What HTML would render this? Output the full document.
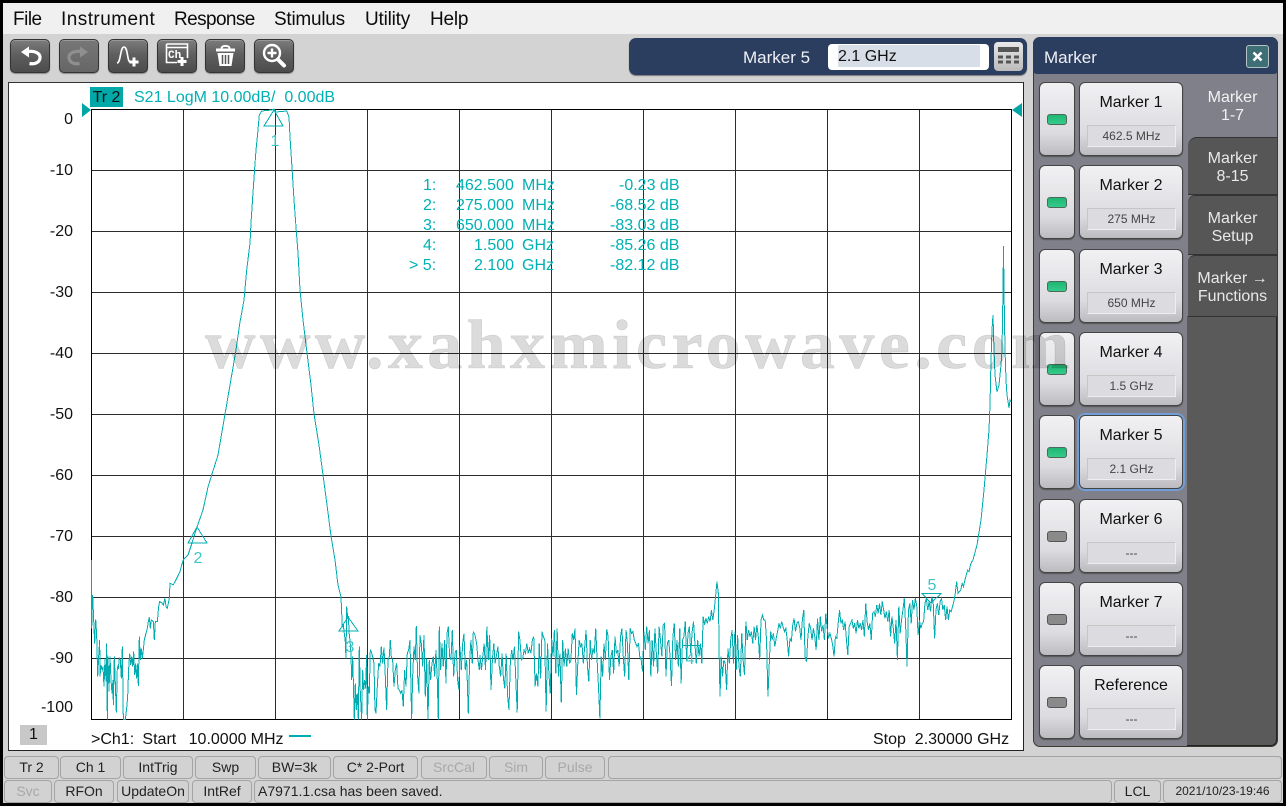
<!DOCTYPE html>
<html><head><meta charset="utf-8"><style>
html,body{margin:0;padding:0;width:1286px;height:806px;overflow:hidden;background:#000}
*{box-sizing:border-box}
body{position:relative;font-family:"Liberation Sans",sans-serif;color:#111}
.a{position:absolute;white-space:pre}
.m{top:8px;font-size:19px;line-height:24px;color:#0c0c0c}
.tb{position:absolute;top:39px;width:40px;height:34px;border-radius:5px;border:1px solid #333;background:linear-gradient(#7c7c7c,#5f5f5f 45%,#4c4c4c);box-shadow:inset 0 1px 0 #999,0 1px 1px #888}
.tb svg{position:absolute;left:-1px;top:-1px}
.y{position:absolute;left:30px;width:43px;text-align:right;font-size:16px;line-height:18px;color:#111}
.t{position:absolute;font-size:16px;line-height:20px;color:#00b0b4;white-space:pre}
.led{position:absolute;left:1039px;width:36px;height:74px;border:1px solid #444;border-radius:6px;background:linear-gradient(#f1f1f4,#dcdce0 70%,#bcbcc0);box-shadow:0 1px 1px #555}
.led i{position:absolute;left:7px;top:31px;width:20px;height:11px;border-radius:3px;border:1px solid #555;background:#8a8a8a}
.led i.g{background:linear-gradient(#1fb673,#35cb8b);border-color:#4a6a5a}
.btn{position:absolute;left:1079px;width:104px;height:74px;border:1px solid #444;border-radius:6px;background:linear-gradient(#f1f1f4,#dcdce0 70%,#bcbcc0);box-shadow:0 1px 1px #555;text-align:center;font-size:16px;line-height:20px;color:#111;padding-top:10px}
.btn b{position:absolute;left:7px;top:42px;width:89px;height:22px;font-weight:normal;font-size:12px;line-height:21px;color:#444;border:1px solid #c6c6c6;border-bottom-color:#eee;border-right-color:#eee;background:#dcdce0}
.tab{position:absolute;left:1188px;width:89px;text-align:center;font-size:16px;line-height:18px;color:#e8e8ea;background:#565656;border-radius:9px 0 0 0;border-top:1px solid #333;border-bottom:1px solid #333;padding-top:12px}
.s{position:absolute;height:23px;border:1px solid #a4a4a4;border-radius:4px;background:#d2d2d2;text-align:center;font-size:14px;line-height:21px;color:#222;white-space:pre}
.d{color:#a8a8a8}
</style></head><body>
<div class="a" style="left:3px;top:3px;width:1280px;height:800px;background:#d3d3d3"></div>
<div class="a" style="left:3px;top:3px;width:1280px;height:31px;background:#f0f0f0"></div>
<span class="a m" style="left:13px;letter-spacing:-.5px">File</span>
<span class="a m" style="left:61px;letter-spacing:.45px">Instrument</span>
<span class="a m" style="left:174px;letter-spacing:-.6px">Response</span>
<span class="a m" style="left:274px;letter-spacing:-.25px">Stimulus</span>
<span class="a m" style="left:365px;letter-spacing:-.2px">Utility</span>
<span class="a m" style="left:430px;letter-spacing:-.2px">Help</span>

<div class="tb" style="left:10px"><svg width="40" height="34" viewBox="0 0 40 34"><path d="M11 13L19 7.500V18.500Z" fill="#fff"/><path d="M18 12.500C26 11.500 30.500 15 30 19C29.500 23.500 25 25.500 19.500 24.500" fill="none" stroke="#fff" stroke-width="3.200"/></svg></div>
<div class="tb" style="left:59px;background:linear-gradient(#777,#666);"><svg width="40" height="34" viewBox="0 0 40 34"><path d="M29 13L21 7.500V18.500Z" fill="#8f8f8f"/><path d="M22 12.500C14 11.500 9.500 15 10 19C10.500 23.500 15 25.500 20.500 24.500" fill="none" stroke="#8f8f8f" stroke-width="3.200"/></svg></div>
<div class="tb" style="left:108px"><svg width="40" height="34" viewBox="0 0 40 34"><path d="M9 24C13 24 12 8 16 8C20 8 19 22 22 23" fill="none" stroke="#fff" stroke-width="1.600"/><path d="M26 18.500V27.500M21.500 23H30.500" stroke="#fff" stroke-width="3"/></svg></div>
<div class="tb" style="left:157px"><svg width="40" height="34" viewBox="0 0 40 34"><path d="M9.500 5H30.500V19M20 23.500H9.500V5M9.500 8.500H30.500" fill="none" stroke="#fff" stroke-width="1.600"/><text x="11" y="19" font-family="Liberation Mono,monospace" font-size="11" font-weight="bold" fill="#fff">Ch</text><path d="M25 18V27M20.500 22.500H29.500" stroke="#fff" stroke-width="3"/></svg></div>
<div class="tb" style="left:205px"><svg width="40" height="34" viewBox="0 0 40 34"><path d="M11 11H30" stroke="#fff" stroke-width="3"/><path d="M16.500 9.500C16.500 6 24.500 6 24.500 9.500" fill="none" stroke="#fff" stroke-width="2"/><path d="M12.500 14H28.500L26.500 27H14.500Z" fill="#fff"/><path d="M17.500 16V25M20.500 16V25M23.500 16V25" stroke="#555" stroke-width="1.500"/></svg></div>
<div class="tb" style="left:254px"><svg width="40" height="34" viewBox="0 0 40 34"><circle cx="18" cy="14" r="8" fill="none" stroke="#fff" stroke-width="2.400"/><path d="M18 9.500V18.500M13.500 14H22.500" stroke="#fff" stroke-width="2.400"/><path d="M24 20.500L30 26.500" stroke="#fff" stroke-width="4" stroke-linecap="round"/></svg></div>

<div class="a" style="left:629px;top:38px;width:398px;height:37px;border-radius:7px;background:#2c3e60;box-shadow:0 1px 1px #777"></div>
<span class="a" style="left:743px;top:47px;font-size:17px;line-height:22px;color:#eef0f4">Marker 5</span>
<div class="a" style="left:828px;top:44px;width:161px;height:26px;border-radius:4px;background:#fff"></div>
<div class="a" style="left:838px;top:45px;width:142px;height:22px;background:#d8dee8;font-size:16px;line-height:23px;color:#111">2.1 GHz</div>
<div class="a" style="left:994px;top:42px;width:29px;height:29px;border-radius:4px;background:linear-gradient(#e8e8e8,#bbb)"><svg width="29" height="29" style="position:absolute;left:0;top:0"><rect x="4" y="5" width="21" height="5" fill="#555"/><path d="M4 15H25M4 20H25" stroke="#555" stroke-width="3" stroke-dasharray="5 3"/></svg></div>

<div class="a" style="left:8px;top:82px;width:1016px;height:669px;background:#fff;border:1px solid #333;border-right-color:#222;border-bottom-color:#222"></div>
<div class="a" style="left:90px;top:87px;width:33px;height:20px;background:#00a8a8;color:#111;font-size:16px;line-height:21px;text-align:center">Tr 2</div>
<span class="t" style="left:134px;top:88px">S21 LogM 10.00dB/  0.00dB</span>

<div class="y" style="top:111px">0</div><div class="y" style="top:162px">-10</div><div class="y" style="top:223px">-20</div><div class="y" style="top:284px">-30</div><div class="y" style="top:345px">-40</div><div class="y" style="top:406px">-50</div><div class="y" style="top:467px">-60</div><div class="y" style="top:528px">-70</div><div class="y" style="top:589px">-80</div><div class="y" style="top:650px">-90</div><div class="y" style="top:699px">-100</div>

<svg class="a" style="left:0;top:0" width="1286" height="806">
<path d="M183.500 109V719M275.500 109V719M367.500 109V719M459.500 109V719M551.500 109V719M643.500 109V719M735.500 109V719M827.500 109V719M919.500 109V719M91 170.500H1011M91 231.500H1011M91 292.500H1011M91 353.500H1011M91 414.500H1011M91 475.500H1011M91 536.500H1011M91 597.500H1011M91 658.500H1011" stroke="#2c2c2c" stroke-width="1" fill="none"/>
<path d="M91.500 109.500H1011.500V719.500H91.500Z" stroke="#000" stroke-width="1" fill="none"/>
<path d="M82 103L91 110L82 117Z M1022 103L1012 110L1022 117Z" fill="#00a5a5"/>
<g fill="none" stroke="#00acb0" stroke-width="1" shape-rendering="crispEdges">
<polyline vector-effect="non-scaling-stroke" transform="translate(80 560) scale(.3333)" points="35,0 35,205 38,105 41,180 44,250 47,178 50,225 53,350 56,290 59,240 60,350 63,315 66,330 69,320 72,380 75,295 78,365 80,250 82,478 84,290 87,395 90,290 93,360 96,400 99,360 100,435 103,290 106,370 109,458 112,320 115,325 118,295 121,300 124,355 127,260 130,478 133,478 136,478 140,445 143,410 146,325 149,280 152,315 155,290 158,320 161,275 164,345 167,310 170,355 173,310 175,378 178,230 181,300 184,265 187,295 190,270 193,240 198,220 202,205 205,185 208,172 211,205 214,180 220,185 223,240 226,185 232,185 236,140 239,125 245,128 250,135 255,115 258,140 262,145 268,115 270,70 275,72 280,75 285,65 290,55 295,45 300,35 305,15 310,0"/>
<polyline points="183,560 188,555 192,543 197,527 203,510 208,487 212,474 218,455 224,420 230,385 236,350 240,322 244,300 246.700,270 250,243 251,223 252.700,197 254.700,168 256,150 257.700,133 259.300,115 261.700,111 271.700,110 274,109 276,112 286.700,111 289,117 290,137 292,168 294,200 296,227 298,253 300,290 303,320 307,353 311,385 314,414 319,445 323,475 327,505 331,536 335,560 338,585 341,597"/>
<polyline vector-effect="non-scaling-stroke" transform="translate(80 560) scale(.3333)" points="783,110 787,200 790,195 793,220 796,245 798,295 800,140 803,170 805,170 808,225 810,240 813,280 815,360 818,290 820,360 823,478 826,370 829,450 832,400 835,478 838,260 841,400 845,478 848,330 851,390 854,360 857,385 860,285 862,478 865,380 868,400 871,270 874,275 878,290 882,310 885,450 888,460 892,380 896,310 900,320 904,260 908,310 912,262 916,350 920,450 924,300 928,290 931,240 934,290 938,300 942,380 946,330 950,310 954,385 958,390 962,400 966,390 970,440 974,330 978,380 982,280 986,270 990,240 995,478 998,350 1002,260 1006,300 1009,198 1013,350 1017,400 1020,225 1024,250 1028,320 1032,225 1036,410 1040,295 1044,478 1048,300 1052,360 1056,310 1060,290 1064,350 1068,270 1072,360 1075,478 1078,200 1082,330 1086,250 1090,320 1094,240 1098,370 1101,220 1105,200 1109,290 1113,300 1117,210 1121,350 1125,280 1129,270 1133,360 1137,390 1140,260 1144,330 1148,250 1152,220 1156,330 1160,300 1165,460 1169,300 1173,240 1177,310 1180,215 1185,225 1190,250 1194,300 1198,330 1200,300"/>
<polyline vector-effect="non-scaling-stroke" transform="translate(480 560) scale(.3444 .3333)" points="0,285 4,330 8,290 12,250 16,330 20,200 24,300 28,225 32,390 36,300 40,250 44,310 48,285 52,260 56,320 60,350 64,280 68,355 72,385 76,280 80,405 84,450 88,310 92,270 96,300 100,260 104,360 108,458 112,215 116,240 120,300 124,295 128,270 132,280 136,250 140,280 144,265 148,280 152,240 156,230 160,380 164,340 168,380 172,250 176,355 180,215 184,230 188,240 192,455 196,250 200,340 204,400 208,235 212,290 216,210 220,340 224,205 228,350 232,280 236,428 240,240 244,320 248,265 252,320 256,265 260,310 264,300 268,220 272,240 276,205 280,405 284,310 288,240 292,260 296,250 300,310 304,260 308,210 312,320 316,365 320,240 324,300 328,265 332,280 336,205 340,300 344,380 348,475 352,290 356,350 360,250 364,300 368,208 372,230 376,360 380,290 384,270 388,340 392,230 396,280 400,270 404,320 408,230 412,205 416,290 420,350 424,210 428,250 432,360 436,205 440,220 444,215 448,240 452,250 456,260 460,250 464,290 468,300 472,335 476,215 480,270 484,200 488,250 492,210 496,350 500,240 504,320 508,205 512,280 516,340 520,200 524,240 528,290 532,195 536,190 540,350 544,250 548,240 552,290 556,378 560,230 564,190 568,300 572,240 576,320 580,205 584,370 588,240 592,230 596,185 600,300 604,220 608,200 612,280 616,215 620,185 624,250 628,310 632,240 636,290 640,250 644,310 648,170 652,195 656,175 660,190 664,170 668,185 672,150 676,180 680,150 684,110 688,65 692,100 695,320 697,410 700,290 704,350 708,300 712,310 716,390 720,265 724,310 728,240 732,210 736,310 740,215 744,330 748,225 752,320 756,350 760,220 764,300 768,345 772,185 776,240 780,210 784,230 788,215 792,250 796,200 800,240 804,195 808,230 812,300 816,180 820,165 824,180 828,180 832,240 836,410 840,310 844,215 848,240 852,220 856,260 860,235 864,215 868,190 872,205 876,185 880,200 884,215 888,205 892,240 896,290 900,235 904,245 908,195 912,175 916,215 920,190 924,185 928,200 932,240 936,180 940,150 944,290 948,305 952,230 956,190 960,205 964,240 968,205 972,230 976,270 980,175 984,240 988,170 992,215 996,195 1000,240 1004,160 1008,205 1012,235 1016,220 1020,235 1024,255 1028,290 1032,230 1036,235 1040,190 1044,150 1048,190 1052,180 1056,210 1060,185 1064,240 1068,285 1072,200 1076,190 1080,180 1084,205 1088,190 1092,220 1096,180 1100,205 1104,190 1108,210 1112,180 1116,230 1120,130 1124,185 1128,210 1132,190 1136,240 1140,160 1144,155 1148,170 1152,135 1156,160 1160,130 1164,165 1168,125 1172,150 1176,175 1180,155 1184,185 1188,150 1192,230 1196,170 1200,205 1204,250 1208,180 1212,300 1216,140 1220,220 1224,180 1228,150 1232,115 1236,200 1240,320 1244,150 1248,130 1252,190 1256,120 1260,150 1264,115 1268,135 1272,225 1276,180 1280,205 1284,190 1288,185 1292,130 1296,115 1300,150 1304,125 1308,155 1312,110 1316,130 1320,235 1324,150 1328,130 1332,165 1336,125 1340,115 1344,150 1348,135 1352,180 1356,140 1360,180 1364,150 1368,155 1372,140 1376,125 1380,100 1384,65 1388,100 1392,95 1396,90 1400,70 1404,80 1408,60 1412,45 1416,30 1420,35 1424,15 1428,5 1432,0"/>
<polyline points="973,560 977,545 981,520 984,490 987,455 989,430 990,405 991,360 992,330 993,315 994,350 995,375 997,392 999,385 1001,365 1002,350 1003,290 1003.500,246 1004,290 1005,350 1006,380 1007,395 1009,408 1010,400 1011,402"/>
<path d="M274 110L264 126H283Z M197 527L188 543H207Z M348 617L339 631H358Z M682 645.500H700 M931 603L922 593.500H941Z"/>
<path d="M289 736H311" stroke-width="2"/>
</g>
<g font-family="Liberation Sans,sans-serif" font-size="16" fill="#3cc4c8" text-anchor="middle"><text x="275" y="146">1</text><text x="198" y="563">2</text><text x="350" y="652">3</text><text x="690" y="664">4</text><text x="932" y="590">5</text></g>
</svg>

<span class="t" style="left:423px;top:176px">1:</span><span class="t" style="left:423px;top:196px">2:</span><span class="t" style="left:423px;top:216px">3:</span><span class="t" style="left:423px;top:236px">4:</span><span class="t" style="left:409px;top:256px">&gt; 5:</span>
<span class="t" style="left:456px;top:176px">462.500</span><span class="t" style="left:456px;top:196px">275.000</span><span class="t" style="left:456px;top:216px">650.000</span><span class="t" style="left:474px;top:236px">1.500</span><span class="t" style="left:474px;top:256px">2.100</span>
<span class="t" style="left:522px;top:176px">MHz</span><span class="t" style="left:522px;top:196px">MHz</span><span class="t" style="left:522px;top:216px">MHz</span><span class="t" style="left:522px;top:236px">GHz</span><span class="t" style="left:522px;top:256px">GHz</span>
<span class="t" style="left:619px;top:176px">-0.23 dB</span><span class="t" style="left:610px;top:196px">-68.52 dB</span><span class="t" style="left:610px;top:216px">-83.03 dB</span><span class="t" style="left:610px;top:236px">-85.26 dB</span><span class="t" style="left:610px;top:256px">-82.12 dB</span>

<div class="a" style="left:20px;top:725px;width:27px;height:20px;background:#c8c8c8;text-align:center;font-size:16px;line-height:20px">1</div>
<span class="a" style="left:91px;top:730px;font-size:16px;line-height:20px;color:#111;word-spacing:-.3px">&gt;Ch1:  Start   10.0000 MHz</span>
<span class="a" style="left:873px;top:730px;font-size:16px;line-height:20px;color:#111">Stop  2.30000 GHz</span>

<div class="a" style="left:1033px;top:37px;width:245px;height:710px;background:#7f8089;border:1px solid #3a3a30;border-radius:7px"></div>
<div class="a" style="left:1187px;top:316px;width:90px;height:430px;background:#5a5a5a;border-radius:0 0 6px 0;border-bottom:1px solid #222;border-right:1px solid #222"></div>
<div class="a" style="left:1033px;top:37px;width:245px;height:37px;background:#2c3e60;border-radius:7px 7px 4px 4px;font-size:17px;line-height:42px;color:#eef0f4;padding-left:11px">Marker</div>
<div class="a" style="left:1246px;top:45px;width:23px;height:23px;border:1px solid #b4c4c4;border-radius:3px;background:#3f6f76"><svg width="21" height="21"><path d="M6.500 6.500L14.500 14.500M14.500 6.500L6.500 14.500" stroke="#fff" stroke-width="2.600"/></svg></div>

<div class="tab" style="top:76px;height:62px;background:#7f8089;border:0;border-radius:0;color:#f2f2f4;padding-top:13px">Marker<br>1-7</div>
<div class="tab" style="top:137px;height:58px">Marker<br>8-15</div>
<div class="tab" style="top:195px;height:60px;border-radius:7px 0 0 0;padding-top:14px">Marker<br>Setup</div>
<div class="tab" style="top:255px;height:62px;border-radius:7px 0 0 0;padding-top:14px">Marker <span style="font-weight:bold">&#8594;</span><br>Functions</div>

<div class="led" style="top:82px"><i class="g"></i></div><div class="btn" style="top:82px">Marker 1<b>462.5 MHz</b></div>
<div class="led" style="top:165px"><i class="g"></i></div><div class="btn" style="top:165px">Marker 2<b>275 MHz</b></div>
<div class="led" style="top:249px"><i class="g"></i></div><div class="btn" style="top:249px">Marker 3<b>650 MHz</b></div>
<div class="led" style="top:332px"><i class="g"></i></div><div class="btn" style="top:332px">Marker 4<b>1.5 GHz</b></div>
<div class="led" style="top:415px"><i class="g"></i></div><div class="btn" style="top:415px;box-shadow:0 0 0 2px #6f9fd6">Marker 5<b>2.1 GHz</b></div>
<div class="led" style="top:499px"><i></i></div><div class="btn" style="top:499px">Marker 6<b>---</b></div>
<div class="led" style="top:582px"><i></i></div><div class="btn" style="top:582px">Marker 7<b>---</b></div>
<div class="led" style="top:665px"><i></i></div><div class="btn" style="top:665px">Reference<b>---</b></div>

<div class="a" style="left:205px;top:306px;font-family:'Liberation Serif',serif;font-weight:bold;font-size:70px;line-height:80px;letter-spacing:4.400px;-webkit-text-stroke:.6px rgba(0,0,0,.14);color:rgba(0,0,0,.14)">www.xahxmicrowave.com</div>

<div class="s" style="left:4px;top:756px;width:55px">Tr 2</div><div class="s" style="left:60px;top:756px;width:61px">Ch 1</div><div class="s" style="left:123px;top:756px;width:70px">IntTrig</div><div class="s" style="left:195px;top:756px;width:61px">Swp</div><div class="s" style="left:258px;top:756px;width:73px">BW=3k</div><div class="s" style="left:333px;top:756px;width:85px">C* 2-Port</div><div class="s d" style="left:421px;top:756px;width:66px">SrcCal</div><div class="s d" style="left:489px;top:756px;width:54px">Sim</div><div class="s d" style="left:545px;top:756px;width:60px">Pulse</div><div class="s" style="left:608px;top:756px;width:674px"></div>
<div class="s d" style="left:4px;top:780px;width:48px">Svc</div><div class="s" style="left:54px;top:780px;width:60px">RFOn</div><div class="s" style="left:117px;top:780px;width:72px">UpdateOn</div><div class="s" style="left:192px;top:780px;width:60px">IntRef</div><div class="s" style="left:254px;top:780px;width:858px;text-align:left;padding-left:3px">A7971.1.csa has been saved.</div><div class="s" style="left:1114px;top:780px;width:47px">LCL</div><div class="s" style="left:1163px;top:780px;width:119px;font-size:12px">2021/10/23-19:46</div>
</body></html>
